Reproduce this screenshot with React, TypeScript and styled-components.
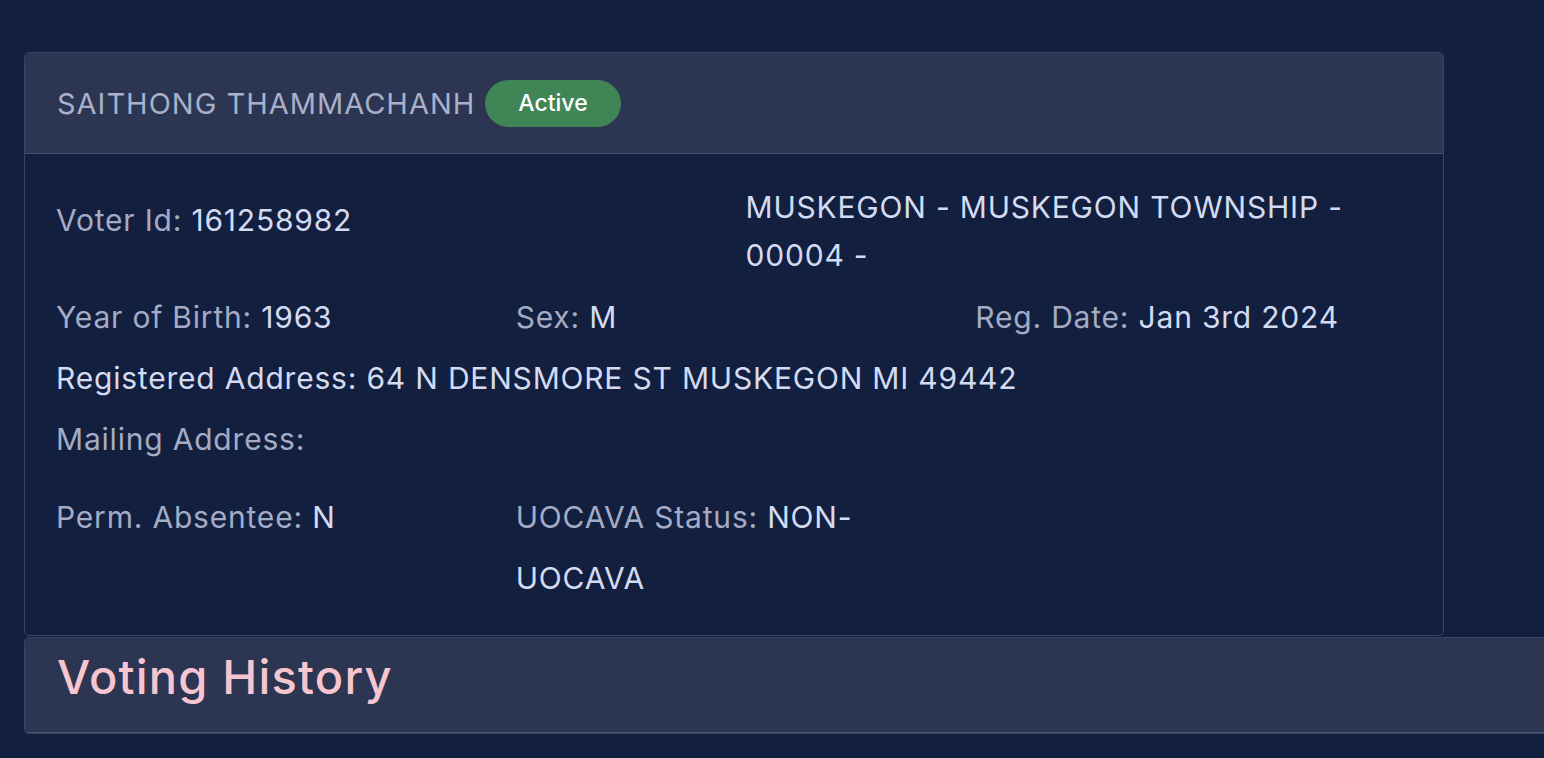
import React from 'react'
import styled, { createGlobalStyle } from 'styled-components'

const GlobalStyle = createGlobalStyle`
  html, body {
    margin: 0;
    padding: 0;
    background: #131f3f;
    overflow: hidden;
  }
  body {
    font-family: Inter, "Liberation Sans", sans-serif;
    color: #d3dbf2;
  }
`

const Page = styled.div`
  padding: 52px 0 0 24px;
  width: 1600px;
`

const Card = styled.section<{ wide?: boolean }>`
  width: ${p => (p.wide ? '1560px' : '1420px')};
  border: 1px solid #3a4462;
  border-radius: 5px;
  box-sizing: border-box;
  margin-bottom: 1px;
  overflow: hidden;
`

const Header = styled.header<{ tall?: number; lift?: number }>`
  display: flex;
  align-items: center;
  gap: 10px;
  height: ${p => p.tall || 101}px;
  padding: 0 32px ${p => p.lift || 0}px;
  box-sizing: border-box;
  background: #2c3552;
  border-bottom: 1px solid #48526f;
`

const Name = styled.span`
  font-size: 29px;
  letter-spacing: 1px;
  color: #a9b0c9;
  text-transform: uppercase;
`

const Badge = styled.span`
  display: inline-flex;
  align-items: center;
  height: 47px;
  padding: 0 33px;
  border-radius: 24px;
  background: #408556;
  color: #ffffff;
  font-size: 23px;
  font-weight: 500;
`

const Title = styled.h2`
  margin: 0;
  font-size: 47px;
  font-weight: 500;
  letter-spacing: 1.2px;
  color: #f7c5cf;
`

const Body = styled.div`
  padding: 29px 20px 26px 19px;
  font-size: 30px;
  letter-spacing: 0.8px;
`

const Row = styled.div<{ cols: number; gap?: number }>`
  display: grid;
  grid-template-columns: repeat(${p => p.cols}, 1fr);
  margin-top: ${p => p.gap || 0}px;
`

const Field = styled.div<{ lh?: number; offset?: number; bright?: boolean }>`
  padding: 0 12px;
  line-height: ${p => p.lh || 61}px;
  margin-top: ${p => p.offset || 0}px;
  color: ${p => (p.bright ? '#d3dbf2' : '#a4abc4')};
`

const Value = styled.span`
  color: #d3dbf2;
`

export default function App() {
  return (
    <>
      <GlobalStyle />
      <Page>
        <Card>
          <Header>
            <Name>Saithong Thammachanh</Name>
            <Badge>Active</Badge>
          </Header>
          <Body>
            <Row cols={2}>
              <Field lh={48} offset={13}>
                Voter Id: <Value>161258982</Value>
              </Field>
              <Field lh={48} bright>
                MUSKEGON - MUSKEGON TOWNSHIP - 00004 -
              </Field>
            </Row>
            <Row cols={3} gap={8}>
              <Field>
                Year of Birth: <Value>1963</Value>
              </Field>
              <Field>
                Sex: <Value>M</Value>
              </Field>
              <Field>
                Reg. Date: <Value>Jan 3rd 2024</Value>
              </Field>
            </Row>
            <Row cols={1}>
              <Field bright>Registered Address: 64 N DENSMORE ST MUSKEGON MI 49442</Field>
            </Row>
            <Row cols={1}>
              <Field>Mailing Address:</Field>
            </Row>
            <Row cols={3} gap={17}>
              <Field>
                Perm. Absentee: <Value>N</Value>
              </Field>
              <Field>
                UOCAVA Status: <Value>NON-UOCAVA</Value>
              </Field>
              <Field />
            </Row>
          </Body>
        </Card>
        <Card wide>
          <Header tall={95} lift={18}>
            <Title>Voting History</Title>
          </Header>
        </Card>
      </Page>
    </>
  )
}
